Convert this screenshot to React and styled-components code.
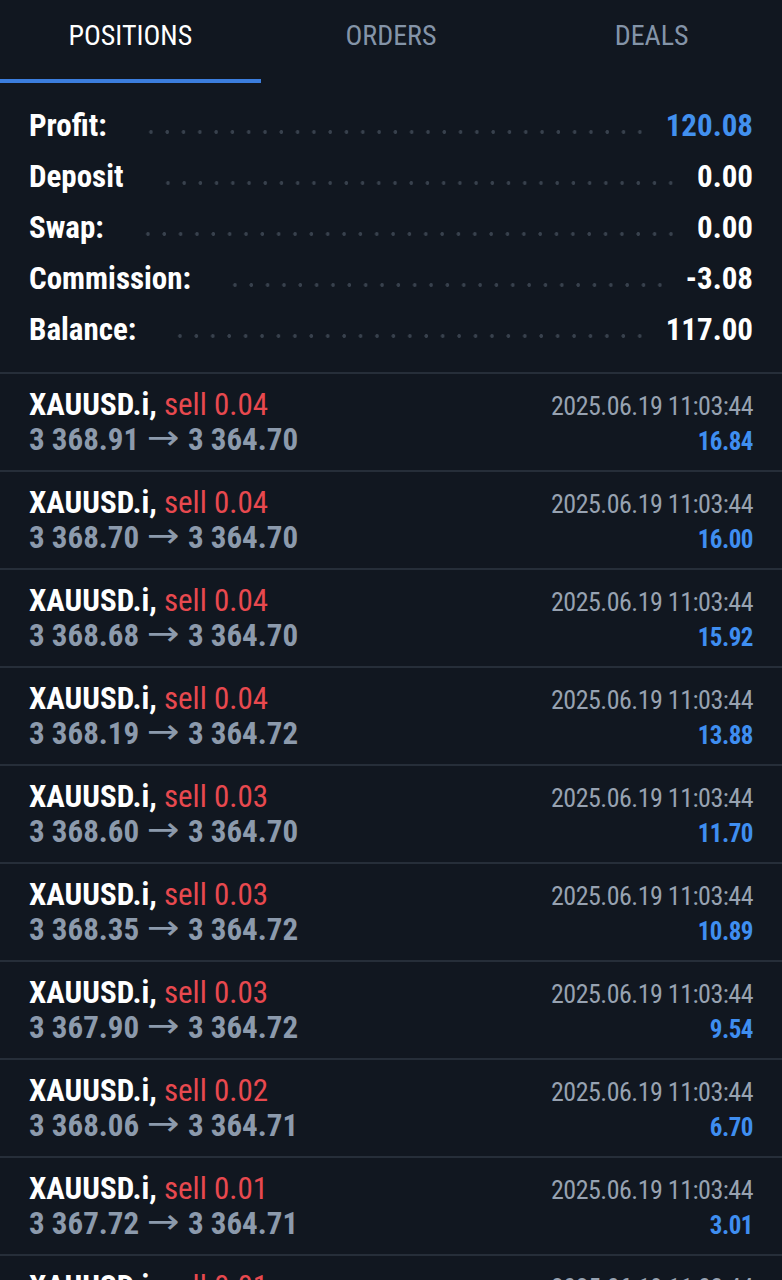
import styled, { createGlobalStyle } from "styled-components";

const GlobalStyle = createGlobalStyle`
  html,
  body {
    margin: 0;
    background: #111720;
  }

  body {
    font-family: "Roboto Condensed", "Liberation Sans Narrow", Roboto, sans-serif;
    color: #ffffff;
    overflow: hidden;
  }
`;

const summary = [
  { label: "Profit:", value: "120.08", accent: true },
  { label: "Deposit", value: "0.00" },
  { label: "Swap:", value: "0.00" },
  { label: "Commission:", value: "-3.08" },
  { label: "Balance:", value: "117.00" },
];

const positions = [
  { lot: "0.04", open: "3 368.91", close: "3 364.70", profit: "16.84" },
  { lot: "0.04", open: "3 368.70", close: "3 364.70", profit: "16.00" },
  { lot: "0.04", open: "3 368.68", close: "3 364.70", profit: "15.92" },
  { lot: "0.04", open: "3 368.19", close: "3 364.72", profit: "13.88" },
  { lot: "0.03", open: "3 368.60", close: "3 364.70", profit: "11.70" },
  { lot: "0.03", open: "3 368.35", close: "3 364.72", profit: "10.89" },
  { lot: "0.03", open: "3 367.90", close: "3 364.72", profit: "9.54" },
  { lot: "0.02", open: "3 368.06", close: "3 364.71", profit: "6.70" },
  { lot: "0.01", open: "3 367.72", close: "3 364.71", profit: "3.01" },
  { lot: "0.01", open: "3 367.80", close: "3 364.71", profit: "3.09" },
];

const App = () => {
  return (
    <Screen>
      <GlobalStyle />
      <Tabs>
        <Tab $active>POSITIONS</Tab>
        <Tab>ORDERS</Tab>
        <Tab>DEALS</Tab>
      </Tabs>

      <Summary>
        {summary.map((row) => (
          <SummaryRow key={row.label}>
            <SummaryLabel>{row.label}</SummaryLabel>
            <Leader />
            <SummaryValue $accent={row.accent}>{row.value}</SummaryValue>
          </SummaryRow>
        ))}
      </Summary>

      {positions.map((p, i) => (
        <Position key={i}>
          <Title>
            <Symbol>XAUUSD.i,</Symbol> <Side>sell {p.lot}</Side>
          </Title>
          <Time>2025.06.19 11:03:44</Time>
          <Prices>
            {p.open} <Arrow>→</Arrow> {p.close}
          </Prices>
          <Profit>{p.profit}</Profit>
        </Position>
      ))}
    </Screen>
  );
};

const Screen = styled.div`
  width: 782px;
  height: 1280px;
  overflow: hidden;
  background: #111720;
`;

const Tabs = styled.nav`
  display: grid;
  grid-template-columns: repeat(3, 1fr);
  height: 83px;
`;

const Tab = styled.div`
  display: flex;
  justify-content: center;
  box-sizing: border-box;
  padding-top: 20px;
  font-size: 28px;
  line-height: 32px;
  color: ${(p) => (p.$active ? "#ffffff" : "#8494a8")};
  border-bottom: 4px solid ${(p) => (p.$active ? "#3b7ddd" : "transparent")};
`;

const Summary = styled.section`
  padding: 17px 29px 17px;
`;

const SummaryRow = styled.div`
  display: flex;
  align-items: center;
  height: 51px;
  font-size: 31px;
  font-weight: 700;
`;

const SummaryLabel = styled.span`
  color: #ffffff;
`;

const Leader = styled.span`
  flex: 1;
  height: 4px;
  margin: 12px 18px 0 36px;
  background-image: radial-gradient(circle, #38414d 1.6px, transparent 2.1px);
  background-size: 16px 4px;
  background-repeat: space no-repeat;
`;

const SummaryValue = styled.span`
  color: ${(p) => (p.$accent ? "#4290ee" : "#ffffff")};
`;

const Position = styled.div`
  display: grid;
  grid-template-columns: 1fr auto;
  grid-template-rows: 35px 35px;
  align-items: baseline;
  padding: 13px 29px;
  border-top: 2px solid #262e39;
  line-height: 35px;
  overflow: hidden;
`;

const Title = styled.div`
  font-size: 31px;
  white-space: nowrap;
`;

const Symbol = styled.span`
  font-weight: 700;
  color: #ffffff;
`;

const Side = styled.span`
  color: #e8494f;
`;

const Time = styled.div`
  font-size: 26px;
  letter-spacing: -0.5px;
  color: #97a2b1;
  text-align: right;
`;

const Prices = styled.div`
  font-size: 31px;
  font-weight: 700;
  color: #8c9aac;
  white-space: nowrap;
`;

const Arrow = styled.span`
  display: inline-block;
  margin: 0 3px;
  font-family: "DejaVu Sans", sans-serif;
  font-size: 34px;
  font-weight: 400;
  line-height: 0;
  transform: translateY(-1px) scaleX(1.15);
`;

const Profit = styled.div`
  font-size: 25px;
  font-weight: 700;
  letter-spacing: -0.5px;
  color: #3f8ef0;
  text-align: right;
`;

export default App;
